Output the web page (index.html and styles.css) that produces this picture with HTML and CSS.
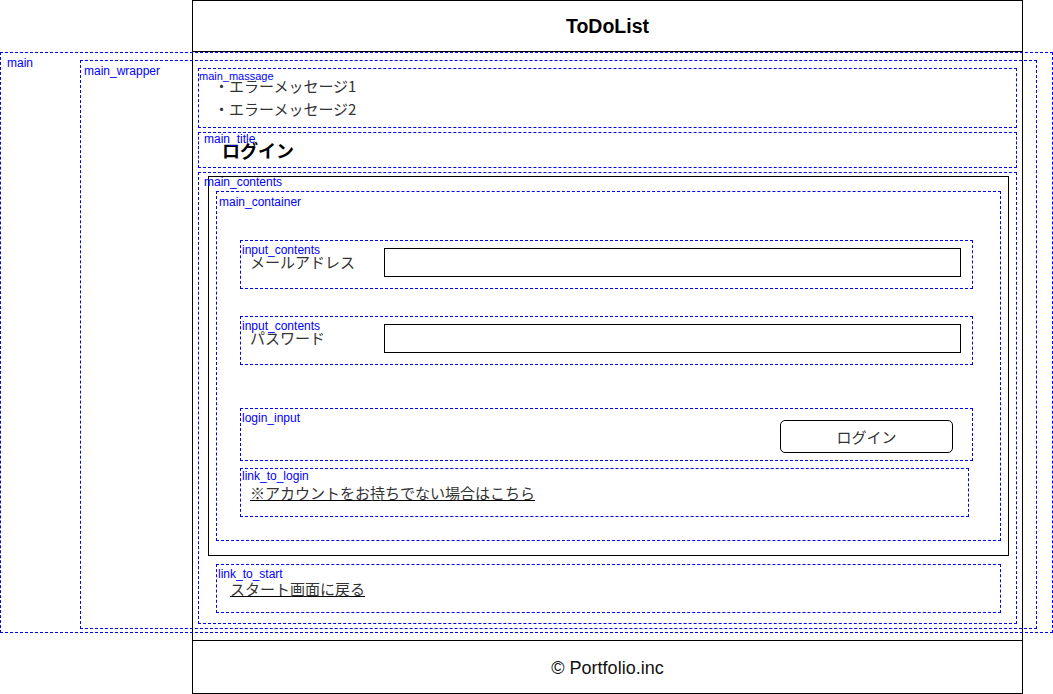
FILE: index.html
```html
<!DOCTYPE html>
<html lang="ja">
<head>
<meta charset="utf-8">
<title>ToDoList - ログイン</title>
<link rel="stylesheet" href="styles.css">
</head>
<body>
<div class="frame">
  <header class="site-header">
    <h1 class="site-title">ToDoList</h1>
  </header>

  <main class="wf main">
    <span class="wf-label lbl-main">main</span>
    <div class="wf main-wrapper">
      <span class="wf-label lbl-wrapper">main_wrapper</span>

      <section class="wf main-massage">
        <span class="wf-label lbl-massage">main_massage</span>
        <ul class="messages jp">
          <li>・エラーメッセージ1</li>
          <li>・エラーメッセージ2</li>
        </ul>
      </section>

      <section class="wf main-title">
        <span class="wf-label lbl-title">main_title</span>
        <h2 class="page-title jp">ログイン</h2>
      </section>

      <section class="wf main-contents">
        <span class="wf-label lbl-contents">main_contents</span>
        <div class="card">
          <form class="wf main-container">
            <span class="wf-label lbl-container">main_container</span>

            <div class="wf input-contents">
              <span class="wf-label lbl-input">input_contents</span>
              <label class="field-label jp" for="email">メールアドレス</label>
              <input class="field-input" id="email" type="email">
            </div>

            <div class="wf input-contents">
              <span class="wf-label lbl-input">input_contents</span>
              <label class="field-label jp" for="password">パスワード</label>
              <input class="field-input" id="password" type="password">
            </div>

            <div class="wf login-input">
              <span class="wf-label lbl-login">login_input</span>
              <button class="btn jp" type="button">ログイン</button>
            </div>

            <div class="wf link-to-login">
              <span class="wf-label lbl-link-login">link_to_login</span>
              <a class="link jp" href="#">※アカウントをお持ちでない場合はこちら</a>
            </div>
          </form>
        </div>

        <div class="wf link-to-start">
          <span class="wf-label lbl-link-start">link_to_start</span>
          <a class="link jp" href="#">スタート画面に戻る</a>
        </div>
      </section>
    </div>
  </main>

  <footer class="site-footer">© Portfolio.inc</footer>
</div>
</body>
</html>
```

FILE: styles.css
```css
* {
  box-sizing: border-box;
}

html,
body {
  margin: 0;
  padding: 0;
  background: #ffffff;
}

body {
  width: 1053px;
  height: 694px;
  overflow: hidden;
  font-family: "Liberation Sans", Arial, sans-serif;
  color: #000000;
}

.jp {
  font-family: "Noto Sans CJK JP", "Liberation Sans", sans-serif;
}

/* outer black frame */
.frame {
  margin-left: 192px;
  width: 831px;
  height: 694px;
  border: 1px solid #000000;
  display: flex;
  flex-direction: column;
}

.site-header {
  flex: none;
  height: 51px;
  border-bottom: 1px solid #000000;
  display: flex;
  align-items: center;
  justify-content: center;
}

.site-title {
  margin: 0;
  font-size: 19.5px;
  font-weight: bold;
  color: #000000;
}

.site-footer {
  flex: none;
  height: 53px;
  border-top: 1px solid #000000;
  display: flex;
  align-items: center;
  justify-content: center;
  padding-top: 2px;
  font-size: 18px;
  color: #111111;
}

/* wireframe boxes */
.wf {
  position: relative;
  border: 1px dashed #0000ff;
}

.wf-label {
  position: absolute;
  font-family: "Liberation Sans", Arial, sans-serif;
  font-size: 12px;
  line-height: 14px;
  color: #0000ff;
  white-space: nowrap;
}

.lbl-main { left: 6px; top: 3px; }
.lbl-wrapper { left: 3px; top: 3px; }
.lbl-massage { left: 0; top: 0; font-size: 11px; }
.lbl-title { left: 5px; top: -1px; }
.lbl-contents { left: 5px; top: 2px; }
.lbl-container { left: 2px; top: 3px; }
.lbl-input { left: 1px; top: 2px; }
.lbl-login { left: 1px; top: 2px; }
.lbl-link-login { left: 1px; top: 0; }
.lbl-link-start { left: 1px; top: 2px; }

.main {
  flex: none;
  height: 581px;
  margin: 0 -31px 7px -193px;
  padding: 7px 15px 3px 79px;
}

.main-wrapper {
  height: 569px;
  padding: 7px 19px 4px 117px;
  display: flex;
  flex-direction: column;
  gap: 4px;
}

.main-massage {
  flex: none;
  height: 60px;
  padding: 6px 0 0 15px;
}

.messages {
  list-style: none;
  margin: 0;
  padding: 0;
  font-size: 15px;
  line-height: 22.5px;
  color: #333333;
}

.main-title {
  flex: none;
  height: 36px;
  padding-left: 23px;
}

.page-title {
  margin: 0;
  font-size: 18px;
  font-weight: bold;
  line-height: 35px;
  color: #000000;
}

.main-contents {
  flex: none;
  height: 452px;
  padding: 0;
}

.card {
  height: 380px;
  margin: 3px 7px 0 9px;
  border: 1px solid #000000;
  padding: 14px 7px;
}

.main-container {
  margin: 0;
  height: 350px;
  padding: 48px 27px 23px 23px;
  display: flex;
  flex-direction: column;
}

.input-contents {
  flex: none;
  height: 49px;
  display: flex;
  align-items: flex-start;
  padding: 7px 11px 0 9px;
}

.input-contents + .input-contents {
  margin-top: 27px;
}

.field-label {
  flex: none;
  width: 134px;
  font-size: 15px;
  line-height: 28px;
  color: #333333;
}

.field-input {
  flex: 1;
  min-width: 0;
  height: 29px;
  margin: 0;
  padding: 0 4px;
  border: 1px solid #000000;
  border-radius: 0;
  background: #ffffff;
  outline: none;
}

.login-input {
  flex: none;
  height: 53px;
  margin-top: 43px;
  display: flex;
  justify-content: flex-end;
  align-items: flex-start;
  padding: 11px 19px 0 0;
}

.btn {
  width: 173px;
  height: 33px;
  margin: 0;
  padding: 0;
  border: 1px solid #000000;
  border-radius: 5px;
  background: #ffffff;
  font-size: 15px;
  color: #333333;
  cursor: pointer;
}

.link-to-login {
  flex: none;
  height: 49px;
  margin: 7px 4px 0 0;
  padding: 13px 0 0 9px;
}

.link-to-start {
  height: 49px;
  margin: 8px 15px 0 17px;
  padding: 13px 0 0 13px;
}

.link {
  font-size: 15px;
  line-height: 22px;
  color: #333333;
  text-decoration: underline;
  text-decoration-color: #000000;
}
```
